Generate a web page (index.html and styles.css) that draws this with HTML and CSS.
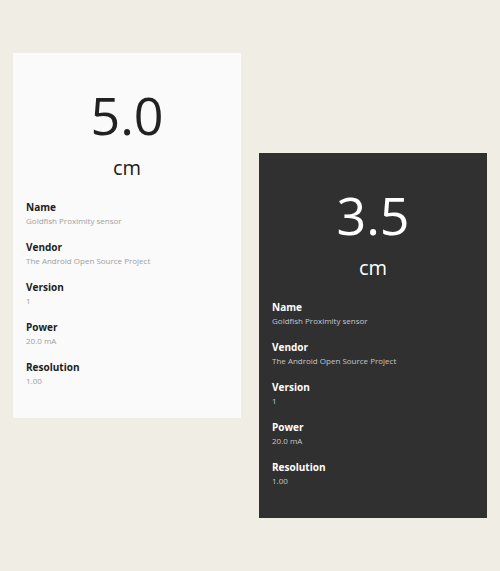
FILE: index.html
```html
<!DOCTYPE html>
<html>
<head>
<meta charset="utf-8">
<link rel="stylesheet" href="styles.css">
</head>
<body>
<div class="stage">
  <div class="card light">
    <div class="reading">
      <div class="value">5.0</div>
      <div class="unit">cm</div>
    </div>
    <div class="props">
      <div class="prop"><div class="label">Name</div><div class="val">Goldfish Proximity sensor</div></div>
      <div class="prop"><div class="label">Vendor</div><div class="val">The Android Open Source Project</div></div>
      <div class="prop"><div class="label">Version</div><div class="val">1</div></div>
      <div class="prop"><div class="label">Power</div><div class="val">20.0 mA</div></div>
      <div class="prop"><div class="label">Resolution</div><div class="val">1.00</div></div>
    </div>
  </div>
  <div class="card dark">
    <div class="reading">
      <div class="value">3.5</div>
      <div class="unit">cm</div>
    </div>
    <div class="props">
      <div class="prop"><div class="label">Name</div><div class="val">Goldfish Proximity sensor</div></div>
      <div class="prop"><div class="label">Vendor</div><div class="val">The Android Open Source Project</div></div>
      <div class="prop"><div class="label">Version</div><div class="val">1</div></div>
      <div class="prop"><div class="label">Power</div><div class="val">20.0 mA</div></div>
      <div class="prop"><div class="label">Resolution</div><div class="val">1.00</div></div>
    </div>
  </div>
</div>
</body>
</html>
```

FILE: styles.css
```css
html, body {
  margin: 0;
  padding: 0;
  background: #f0ede5;
  font-family: "Open Sans", "Noto Sans", sans-serif;
}
.stage {
  display: flex;
  align-items: flex-start;
  gap: 18px;
  padding: 53px 0 0 13px;
}
.card {
  width: 228px;
  height: 365px;
  box-sizing: border-box;
  padding: 26px 13px 0;
}
.light { background: #fafafa; color: #212121; }
.dark { background: #303030; color: #ffffff; margin-top: 100px; }
.reading {
  display: flex;
  flex-direction: column;
  align-items: center;
}
.value {
  font-size: 52px;
  line-height: 72px;
}
.unit {
  font-size: 20px;
  line-height: 28px;
  margin-top: 3px;
}
.props {
  display: flex;
  flex-direction: column;
  gap: 12px;
  margin-top: 18px;
}
.label {
  font-size: 10px;
  font-weight: 700;
  line-height: 14px;
}
.val {
  font-size: 8px;
  line-height: 14px;
}
.light .val { color: #a0a0a0; }
.dark .val { color: #c6c6c6; }
```
